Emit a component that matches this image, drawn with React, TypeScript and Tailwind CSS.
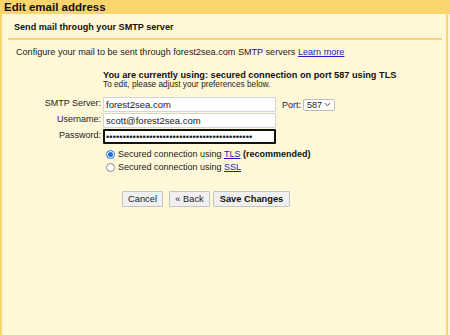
export default function App() {
  return (
    <div className="min-h-[335px] w-[450px] bg-[#fff8d8] font-['Liberation_Sans',Arial,sans-serif] text-[#222]">
      <div className="h-[14px] bg-[#fad46c] pl-[4px] text-[11.5px] font-bold leading-[14px] text-[#111]">Edit email address</div>

      <div className="min-h-[321px] w-[448px] border-x-2 border-[#f9d670] pt-[7px]">
        <div className="ml-[6px] mr-[4px]">
          <h2 className="pl-[6px] text-[9.1px] font-bold leading-[13px] text-[#111]">Send mail through your SMTP server</h2>
          <div className="mt-[4px] h-[2px] bg-[#f7d470]" />
        </div>

        <p className="mt-[6px] pl-[14px] text-[9.1px] leading-[12px]">
          Configure your mail to be sent through forest2sea.com SMTP servers{" "}
          <a href="#" className="text-[#2020c0] underline">Learn more</a>
        </p>

        <div className="ml-[101px] mt-[13px]">
          <div className="text-[9.2px] font-bold leading-[9px] text-[#111]">You are currently using: secured connection on port 587 using TLS</div>
          <div className="text-[8.25px] leading-[9px]">To edit, please adjust your preferences below.</div>
        </div>

        <div className="mt-[8px] flex flex-col gap-[1px]">
          <div className="flex items-start">
            <label className="w-[99px] text-right text-[9px] leading-[13px]">SMTP Server:</label>
            <input
              defaultValue="forest2sea.com"
              className="ml-[2px] h-[15px] w-[173px] rounded-[1px] border border-[#d4d4d4] bg-white px-[2px] text-[9.5px] outline-none"
            />
            <div className="ml-[6px] flex h-[15px] items-center">
              <span className="text-[9px] leading-[12px]">Port:</span>
              <div className="ml-[2px] flex h-[12px] w-[32px] items-center justify-between rounded-[2px] border border-[#bdbdbd] bg-white pl-[3px] pr-[3px] text-[9px] leading-[10px]">
                <span>587</span>
                <svg width="7" height="5" viewBox="0 0 7 5" fill="none">
                  <path d="M1 1.2 L3.5 3.7 L6 1.2" stroke="#333" strokeWidth="0.9" />
                </svg>
              </div>
            </div>
          </div>
          <div className="flex items-start">
            <label className="w-[99px] text-right text-[9px] leading-[13px]">Username:</label>
            <input
              defaultValue="scott@forest2sea.com"
              className="ml-[2px] h-[15px] w-[173px] rounded-[1px] border border-[#d4d4d4] bg-white px-[2px] text-[9.5px] outline-none"
            />
          </div>
          <div className="flex items-start">
            <label className="w-[99px] text-right text-[9px] leading-[13px]">Password:</label>
            <input
              type="password"
              readOnly
              defaultValue="ssssssssssssssssssssssssssssssssssssssssssss"
              className="ml-[2px] h-[15px] w-[173px] rounded-[1px] border-2 border-[#111] bg-white px-[1px] text-[9.5px] outline-none"
            />
          </div>
        </div>

        <div className="ml-[101px] mt-[4px] text-[9px] leading-[13px]">
          <div className="flex items-center">
            <span className="ml-[3px] flex h-[9px] w-[9px] items-center justify-center rounded-full border border-[#1a6fe0] bg-white">
              <span className="h-[5px] w-[5px] rounded-full bg-[#1a6fe0]" />
            </span>
            <span className="ml-[3px]">
              Secured connection using <a href="#" className="text-[#2020c0] underline">TLS</a>{" "}
              <b className="text-[#111]">(recommended)</b>
            </span>
          </div>
          <div className="flex items-center">
            <span className="ml-[3px] h-[9px] w-[9px] rounded-full border border-[#8a8a8a] bg-white" />
            <span className="ml-[3px]">
              Secured connection using <a href="#" className="text-[#2020c0] underline">SSL</a>
            </span>
          </div>
        </div>

        <div className="ml-[120px] mt-[17px] flex text-[9.3px]">
          <button className="h-[16px] w-[41px] rounded-[1px] border border-[#c4c4c4] bg-[#f0f0f0] leading-[14px]">Cancel</button>
          <button className="ml-[6px] h-[16px] w-[41px] rounded-[1px] border border-[#c4c4c4] bg-[#f0f0f0] leading-[14px]">« Back</button>
          <button className="ml-[3px] h-[16px] w-[77px] rounded-[1px] border border-[#c4c4c4] bg-[#f0f0f0] font-bold leading-[14px] text-[#111]">Save Changes</button>
        </div>
      </div>
    </div>
  );
}
